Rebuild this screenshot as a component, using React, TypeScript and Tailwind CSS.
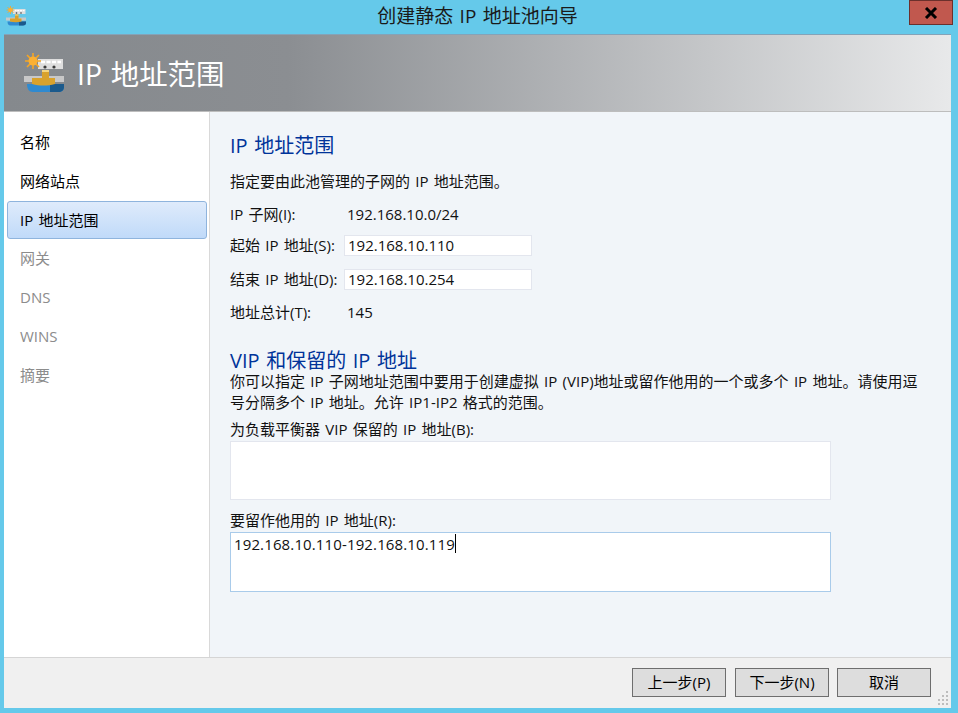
const font = "font-['Open_Sans','Noto_Sans_CJK_SC',sans-serif]";

function WizardIcon({ size }: { size: number }) {
  return (
    <svg width={size} height={size} viewBox="0 0 40 40" className="shrink-0 blur-[0.4px]">
      <rect x="14" y="6" width="25" height="10" fill="#dedede" />
      <path d="M17 9h20" stroke="#ffffff" strokeWidth="2.5" strokeDasharray="4 1.5" />
      <circle cx="21" cy="14" r="1.6" fill="#3c3c3c" />
      <circle cx="30" cy="14" r="1.6" fill="#3c3c3c" />
      <rect x="0" y="23" width="40" height="6" fill="#c8c8c8" />
      <g stroke="#f6a623" strokeWidth="1.6">
        <path d="M9 0v16M1 8h16M3 2l12 12M15 2L3 14" />
      </g>
      <circle cx="9" cy="8" r="4.5" fill="#fbb034" />
      <path d="M3 31h37v3c0 3-2 5-6 5H9c-4 0-6-3-6-8z" fill="#2f8ad0" />
      <path d="M26 31h14v3c0 3-2 5-6 5h-8z" fill="#1b5a8c" />
      <path d="M8 25h10v-8h7v8h6v6c-8 2-15 2-23 0z" fill="#d9a22c" />
      <rect x="18" y="17" width="7" height="2" fill="#f4d680" />
    </svg>
  );
}

function NavItem({ label, state }: { label: string; state: 'done' | 'active' | 'off' }) {
  if (state === 'active') {
    return (
      <div className="mr-[2px] ml-[3px] flex h-[38px] items-center rounded-[3px] border border-[#8fb4dd] bg-gradient-to-b from-[#dfebfb] to-[#c0daf9] pl-[12px] text-black">
        {label}
      </div>
    );
  }
  return (
    <div className={`mx-[3px] flex h-[39px] items-center pl-[13px] ${state === 'off' ? 'text-[#8c8c8c]' : 'text-black'}`}>
      {label}
    </div>
  );
}

function WizardButton({ label }: { label: string }) {
  return (
    <div className="flex h-[29px] w-[94px] items-center justify-center border border-[#6e6e6e] bg-[#dddddd] text-[15px] text-black">
      {label}
    </div>
  );
}

export default function App() {
  return (
    <div className={`${font} flex h-[713px] w-[958px] flex-col overflow-hidden bg-[#65c9ea] text-[15px] text-[#111111] [word-spacing:1.4px]`}>
      {/* title bar */}
      <div className="flex h-[34px] shrink-0 items-start">
        <div className="mt-[6px] ml-[6px]">
          <WizardIcon size={20} />
        </div>
        <div className="flex-1 pt-[5px] pl-[20px] text-center text-[19px] leading-[22px] text-[#1a1a1a]">创建静态 IP 地址池向导</div>
        <div className="mr-[5px] flex h-[25px] w-[44px] items-center justify-center border border-[#6b302c] bg-[#c1584e]">
          <svg width="14" height="12" viewBox="0 0 14 12">
            <path d="M2 1l10 10M12 1L2 11" stroke="#000" strokeWidth="3" />
          </svg>
        </div>
      </div>

      {/* window body */}
      <div className="mr-[7px] mb-[5px] ml-[4px] flex min-h-0 flex-1 flex-col bg-white">
        <div className="flex h-[78px] shrink-0 items-center gap-[13px] border-t border-b border-t-[#84a3b8] border-b-[#bdbdbd] bg-gradient-to-r from-[#85898d] via-[#8b8e92] via-30% to-[#e8e9ea] pl-[20px]">
          <WizardIcon size={40} />
          <div className="pt-[2px] text-[28.4px] leading-[36px] text-white">IP 地址范围</div>
        </div>

        <div className="flex min-h-0 flex-1">
          <div className="w-[206px] shrink-0 border-r border-[#d9d9d9] bg-white pt-[11px]">
            <NavItem label="名称" state="done" />
            <NavItem label="网络站点" state="done" />
            <NavItem label="IP 地址范围" state="active" />
            <NavItem label="网关" state="off" />
            <NavItem label="DNS" state="off" />
            <NavItem label="WINS" state="off" />
            <NavItem label="摘要" state="off" />
          </div>

          <div className="min-w-0 flex-1 bg-[#f1f5f9] pt-[20px] pl-[20px]">
            <div className="text-[20px] leading-[28px] text-[#003399]">IP 地址范围</div>
            <div className="mt-[10px] leading-[22px]">指定要由此池管理的子网的 IP 地址范围。</div>

            <div className="mt-[11px] flex h-[22px] items-center">
              <div className="w-[117px]">IP 子网(I):</div>
              <div>192.168.10.0/24</div>
            </div>
            <div className="mt-[10px] flex h-[21px] items-center">
              <div className="w-[114px]">起始 IP 地址(S):</div>
              <div className="flex h-[21px] w-[188px] items-center border border-[#e3e6ee] bg-white pl-[3px]">192.168.10.110</div>
            </div>
            <div className="mt-[13px] flex h-[21px] items-center">
              <div className="w-[114px]">结束 IP 地址(D):</div>
              <div className="flex h-[21px] w-[188px] items-center border border-[#e3e6ee] bg-white pl-[3px]">192.168.10.254</div>
            </div>
            <div className="mt-[11px] flex h-[22px] items-center">
              <div className="w-[117px]">地址总计(T):</div>
              <div>145</div>
            </div>

            <div className="mt-[28px] text-[20px] leading-[20px] text-[#003399]">VIP 和保留的 IP 地址</div>
            <div className="w-[696px] leading-[21px]">
              你可以指定 IP 子网地址范围中要用于创建虚拟 IP (VIP)地址或留作他用的一个或多个 IP 地址。请使用逗号分隔多个 IP 地址。允许 IP1-IP2 格式的范围。
            </div>
            <div className="mt-[5px] leading-[22px]">为负载平衡器 VIP 保留的 IP 地址(B):</div>
            <div className="mt-[1px] h-[59px] w-[601px] border border-[#e3e6ee] bg-white" />
            <div className="mt-[9px] leading-[22px]">要留作他用的 IP 地址(R):</div>
            <div className="mt-[1px] flex h-[60px] w-[601px] items-start border border-[#a9cbea] bg-white pt-[1px] pl-[3px]">
              <span className="leading-[20px] tracking-[0.13px]">192.168.10.110-192.168.10.119</span>
              <span className="h-[19px] w-px bg-black" />
            </div>
          </div>
        </div>

        {/* footer buttons */}
        <div className="relative flex h-[51px] shrink-0 items-start justify-end gap-[9px] border-t border-[#d5d5d5] bg-[#f0f0f0] pt-[10px] pr-[20px]">
          <WizardButton label="上一步(P)" />
          <WizardButton label="下一步(N)" />
          <div className="-ml-px">
            <WizardButton label="取消" />
          </div>
          <svg width="14" height="16" viewBox="0 0 14 16" className="absolute right-[2px] bottom-[2px]">
            <g fill="#bdbdbd">
              <rect x="11" y="1" width="2" height="2" />
              <rect x="11" y="5" width="2" height="2" />
              <rect x="7" y="5" width="2" height="2" />
              <rect x="11" y="9" width="2" height="2" />
              <rect x="7" y="9" width="2" height="2" />
              <rect x="3" y="9" width="2" height="2" />
              <rect x="11" y="13" width="2" height="2" />
              <rect x="7" y="13" width="2" height="2" />
              <rect x="3" y="13" width="2" height="2" />
            </g>
          </svg>
        </div>
      </div>
    </div>
  );
}
